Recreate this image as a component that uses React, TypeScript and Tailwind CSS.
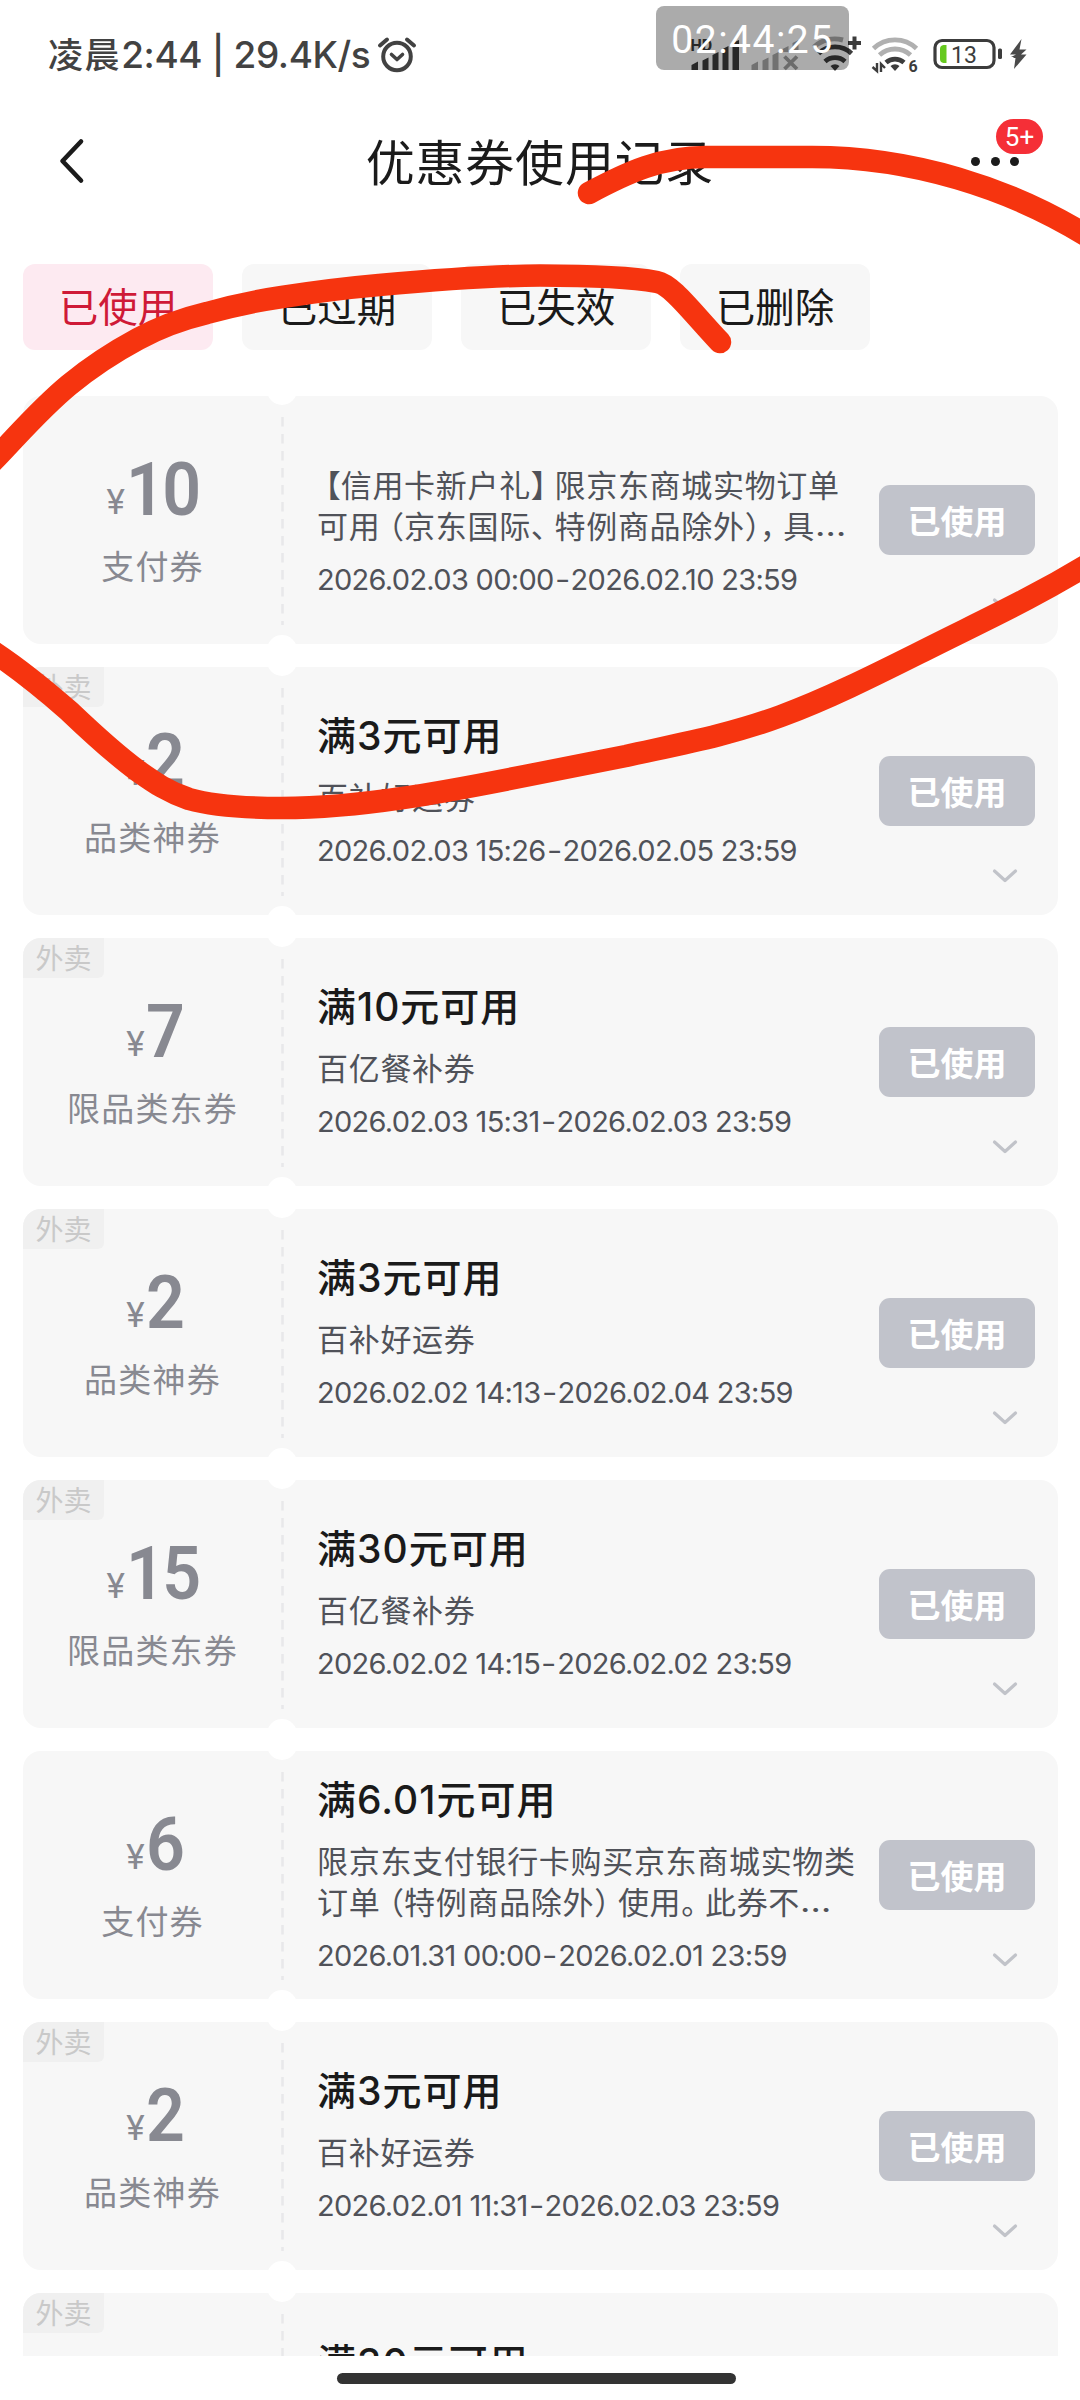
interface Coupon {
  tag?: string;
  amount: string;
  kind: string;
  title?: string;
  lines: string[];
  from: string;
  to: string;
}

const coupons: Coupon[] = [
  {
    amount: "10",
    kind: "支付券",
    lines: ["【信用卡新户礼】限京东商城实物订单", "可用（京东国际、特例商品除外），具…"],
    from: "2026.02.03 00:00",
    to: "2026.02.10 23:59",
  },
  {
    tag: "外卖",
    amount: "2",
    kind: "品类神券",
    title: "满3元可用",
    lines: ["百补好运券"],
    from: "2026.02.03 15:26",
    to: "2026.02.05 23:59",
  },
  {
    tag: "外卖",
    amount: "7",
    kind: "限品类东券",
    title: "满10元可用",
    lines: ["百亿餐补券"],
    from: "2026.02.03 15:31",
    to: "2026.02.03 23:59",
  },
  {
    tag: "外卖",
    amount: "2",
    kind: "品类神券",
    title: "满3元可用",
    lines: ["百补好运券"],
    from: "2026.02.02 14:13",
    to: "2026.02.04 23:59",
  },
  {
    tag: "外卖",
    amount: "15",
    kind: "限品类东券",
    title: "满30元可用",
    lines: ["百亿餐补券"],
    from: "2026.02.02 14:15",
    to: "2026.02.02 23:59",
  },
  {
    amount: "6",
    kind: "支付券",
    title: "满6.01元可用",
    lines: ["限京东支付银行卡购买京东商城实物类", "订单（特例商品除外）使用。此券不…"],
    from: "2026.01.31 00:00",
    to: "2026.02.01 23:59",
  },
  {
    tag: "外卖",
    amount: "2",
    kind: "品类神券",
    title: "满3元可用",
    lines: ["百补好运券"],
    from: "2026.02.01 11:31",
    to: "2026.02.03 23:59",
  },
  {
    tag: "外卖",
    amount: "",
    kind: "",
    title: "满30元可用",
    lines: [],
    from: "",
    to: "",
  },
];

const tabs = ["已使用", "已过期", "已失效", "已删除"];

const StatusIcons = () => (
  <svg className="w-[340px] h-[48px]" viewBox="690 32 340 48" fill="none">
    {/* SIM 1 */}
    <text x="690.500" y="50.500" fontSize="16" fontWeight="700" fill="#3c3c3c" className="font-['Roboto',sans-serif]">HD</text>
    <path
      d="M691.5 70V65l6.5-3.5V70ZM702.500 70V60.500l6-3V70ZM712.500 70V55l6-3V70ZM722.500 70V49l6-3V70ZM732.500 70V43l6.500-3V70Z"
      fill="#3c3c3c"
    />
    {/* SIM 2 */}
    <path
      d="M751.500 70V65l6.500-3.500V70ZM762.500 70V60.500l6-3V70ZM772.500 70V55l6-3V70ZM782.500 52v-3l6-3v6ZM792.500 52V43l6-3v12Z"
      fill="#a9a9a9"
    />
    <path d="m784.500 56.500 12.500 12.500m0-12.500-12.500 12.500" stroke="#a0a0a0" strokeWidth="3.800" />
    {/* Wi-Fi + */}
    <path d="M814 47a31 31 0 0 1 29-7" stroke="#aaa" strokeWidth="5" />
    <path d="M818.500 53.500a24 24 0 0 1 33 0" stroke="#3c3c3c" strokeWidth="4.800" />
    <path d="M825 61.500a15 15 0 0 1 20 0" stroke="#3c3c3c" strokeWidth="4.800" />
    <path d="M835 71l-4.500-5a7 7 0 0 1 9 0Z" fill="#3c3c3c" />
    <path d="M854.500 36.500v13M848 43h13" stroke="#3c3c3c" strokeWidth="4" />
    {/* Wi-Fi 6 */}
    <path d="M873.500 48.500a31 31 0 0 1 43 0" stroke="#b0b0b0" strokeWidth="4.800" />
    <path d="M879.500 55a23 23 0 0 1 31 0" stroke="#b0b0b0" strokeWidth="4.800" />
    <path d="M886 62.500a14 14 0 0 1 18 0" stroke="#3c3c3c" strokeWidth="4.800" />
    <path d="M895 71l-4.500-5a7 7 0 0 1 9 0Z" fill="#3c3c3c" />
    <path d="M877 63v8l-4.500-4M881 72v-8l4 4" stroke="#3c3c3c" strokeWidth="2.400" />
    <text x="908.500" y="72" fontSize="16" fontWeight="700" fill="#3c3c3c" className="font-['Roboto',sans-serif]">6</text>
    {/* Battery */}
    <rect x="935" y="40.500" width="59" height="27" rx="7" stroke="#3c3c3c" strokeWidth="3.200" />
    <rect x="998" y="48.500" width="4" height="10.500" rx="1.500" fill="#3c3c3c" />
    <path d="M946.500 45v18h-3a4 4 0 0 1-3.500-4V49a4 4 0 0 1 3.500-4Z" fill="#66c91f" />
    <text x="964" y="63" fontSize="23" textAnchor="middle" fill="#3c3c3c" className="font-['Roboto',sans-serif]">13</text>
    <path d="M1021.500 39 1010 54.500h6L1011 57h3l-1 1h2.500l-1.500 11 12.500-14.500h-5.500l5.500-5h-7Z" fill="#4a4a4a" />
  </svg>
);

const StatusBar = () => (
  <div className="relative h-[104px] pl-12 pr-[50px] pt-8 flex justify-between items-start text-[#424242]">
    <div className="flex items-center h-[46px] leading-[46px] font-medium whitespace-nowrap">
      <span className="-mt-1 text-[35px] tracking-[1.6px]">凌晨</span>
      <span className="font-['Inter',sans-serif] text-[37px] tracking-[-0.4px] w-[255px]">2:44 | 29.4K/s</span>
      <svg className="-mt-px w-[42px] h-[42px]" viewBox="0 0 42 42" fill="none" stroke="#424242" strokeLinecap="round" strokeLinejoin="round">
        <circle cx="21" cy="22.500" r="13.800" strokeWidth="4" />
        <path d="M15.500 20.500 21 25.500l5.500-5" strokeWidth="3.600" />
        <path d="M4 11.500 11 5.500M38 11.500 31 5.500" strokeWidth="4" />
      </svg>
    </div>
    <StatusIcons />
    {/* Floating clock */}
    <div className="absolute left-[656px] top-[6px] w-[193px] h-16 rounded-lg bg-black/33 flex items-center justify-center text-white font-['Roboto',sans-serif] text-[39px] tracking-[1.5px] pt-[5px]">
      02:44:25
    </div>
  </div>
);

const Header = () => (
  <header className="relative h-[118px] pb-1.5 flex justify-center items-center">
    <svg className="absolute left-[56px] top-[31px] w-8 h-[52px]" viewBox="0 0 32 52" fill="none">
      <path d="M25 6.500 6.500 26 25 45.500" stroke="#1b1b1b" strokeWidth="4.600" strokeLinecap="round" strokeLinejoin="round" />
    </svg>
    <h1 className="text-[49px] leading-[60px] tracking-[0.8px] text-[#1b1b1b]">优惠券使用记录</h1>
    <div className="absolute left-[971px] top-[53px] flex gap-[10.5px]">
      <i className="w-[9px] h-[9px] rounded-full bg-[#1b1b1b]" />
      <i className="w-[9px] h-[9px] rounded-full bg-[#1b1b1b]" />
      <i className="w-[9px] h-[9px] rounded-full bg-[#1b1b1b]" />
    </div>
    <span className="absolute left-[996px] top-[15px] w-[47px] h-[35px] rounded-full bg-[#f52f37] text-white font-['Roboto',sans-serif] text-[26px] leading-[37px] text-center">
      5+
    </span>
  </header>
);

// Punctuation is set narrower than a full em
const TextLine = ({ text }: { text: string }) => (
  <span className="flex">
    {[...text].map((ch, i) => {
      let cls = "w-[31.700px]";
      if ("【（".includes(ch)) cls = "w-[23.700px] flex justify-end";
      else if (ch === "）" && text[i + 1] === "，") cls = "w-[15px]";
      else if ("】），、。".includes(ch)) cls = "w-[23.700px]";
      else if (ch === "…") cls = "font-['Inter',sans-serif] origin-left scale-x-[1.17]";
      return <span key={i} className={cls}>{ch}</span>;
    })}
  </span>
);

const CouponCard = ({ coupon }: { coupon: Coupon }) => (
  <div className="relative h-[248px] shrink-0 flex rounded-[18px] bg-[#f7f7f7] overflow-hidden">
    {coupon.tag && (
      <span className="absolute left-0 top-0 w-[81px] h-10 rounded-br-md bg-[#f0f0f0] text-[#c9c9c9] text-[28px] leading-[38px] text-center">
        {coupon.tag}
      </span>
    )}
    {/* Notches and tear line */}
    <i className="absolute left-[244px] -top-[21px] w-[30px] h-[30px] rounded-full bg-white" />
    <i className="absolute left-[244px] -bottom-[21px] w-[30px] h-[30px] rounded-full bg-white" />
    <svg className="absolute left-[258px] top-[21px] w-[3px] h-[208px]" viewBox="0 0 3 208">
      <path d="M1.500 0V208" stroke="#e8e8ea" strokeWidth="2.500" strokeDasharray="9.500 7.500" />
    </svg>

    <div className="w-[259px] flex flex-col items-center text-[#888991]">
      {coupon.amount && (
        <div className="mt-[54px] h-[80px] flex items-baseline leading-[80px] font-['Roboto',sans-serif]">
          <span className="text-[35px] mr-[2px] relative -top-px left-px">¥</span>
          <span className="text-[74px] font-semibold origin-left scale-x-[0.92] tracking-[-3px] -mr-[5px]">{coupon.amount}</span>
        </div>
      )}
      <div className="mt-[12px] text-[33px] leading-[46px] tracking-[1.2px]">{coupon.kind}</div>
    </div>

    {coupon.from ? (
      <div className="flex-1 h-[245px] pl-[35px] flex flex-col justify-center">
        {coupon.title ? (
          <div className="h-[52px] mb-[13px] text-[39px] leading-[52px] font-medium text-[#1a1a1a] font-['Inter','Noto_Sans_CJK_SC',sans-serif] tracking-[1px]">
            {coupon.title}
          </div>
        ) : (
          <div className="h-[24px]" />
        )}
        <div className="text-[31px] leading-[41px] text-[#505259] whitespace-nowrap">
          {coupon.lines.map((l) => (
            <TextLine key={l} text={l} />
          ))}
        </div>
        <div className="mt-[17px] h-9 flex font-['Inter',sans-serif] text-[29px] leading-9 tracking-[-0.7px] text-[#505259] whitespace-nowrap">
          <span>{coupon.from}</span>
          <span className="w-[17px] flex justify-center"><span className="scale-x-[1.15]">-</span></span>
          <span>{coupon.to}</span>
        </div>
      </div>
    ) : (
      <div className="flex-1 pt-[44px] pl-[35px] text-[39px] leading-[52px] font-medium text-[#1a1a1a] font-['Inter','Noto_Sans_CJK_SC',sans-serif] tracking-[1px]">
        {coupon.title}
      </div>
    )}

    {coupon.from && (
      <div className="absolute right-[23px] top-[89px] w-[156px] flex flex-col items-end">
        <button className="w-[156px] h-[70px] rounded-[11px] bg-[#c1c3cb] text-white text-[33px] leading-[68px] font-bold">已使用</button>
        <svg className="mt-[41px] mr-[16px] w-7 h-[18px]" viewBox="0 0 28 18" fill="none">
          <path d="M3.500 4 14 13.500 24.500 4" stroke="#c1c3c9" strokeWidth="3.200" strokeLinecap="round" strokeLinejoin="round" />
        </svg>
      </div>
    )}
  </div>
);

export default function App() {
  return (
    <div lang="zh-CN" className="relative w-[1080px] h-[2400px] flex flex-col bg-white overflow-hidden font-['Noto_Sans_CJK_SC',sans-serif]">
      <StatusBar />
      <Header />

      <nav className="mt-[42px] ml-[23px] h-[86px] flex gap-[29px]">
        {tabs.map((tab, i) => (
          <button
            key={tab}
            className={`w-[190px] pb-1 rounded-xl text-[39.5px] leading-[82px] ${
              i === 0 ? "bg-[#fdeaf1] text-[#cf1a37]" : "bg-[#f7f7f7] text-[#1a1a1a]"
            }`}
          >
            {tab}
          </button>
        ))}
      </nav>

      <main className="mt-[46px] h-[1960px] pl-[23px] pr-[22px] flex flex-col gap-[23px] overflow-hidden">
        {coupons.map((coupon, i) => (
          <CouponCard key={i} coupon={coupon} />
        ))}
      </main>

      <div className="mt-[17px] ml-[337px] w-[399px] h-[11px] rounded-full bg-[#333]" />

      {/* Hand-drawn marker */}
      <svg className="absolute inset-0 w-[1080px] h-[2400px] pointer-events-none" viewBox="0 0 1080 2400" fill="none">
        <g stroke="#f6340f" strokeWidth="22.500" strokeLinecap="round" strokeLinejoin="round">
          <path d="M589 193C628 172 661 157 706 157H812C910 157 1010 187 1092 239" />
          <path d="M1092 562C1030 600 980 622 919 653C873 676 827 699 781 716C730 735 680 744 626 756L540 773C440 793 360 808 282 808C240 808 210 805 189 799C168 792 155 783 138 771C112 752 90 731 69 711C45 690 25 673 -5 653" />
          <path d="M-8 462C20 433 40 409 69 385C92 366 112 353 138 339C160 327 182 319 207 313C232 306 255 301 282 297C314 292 345 288 379 285C435 280 490 275.500 540 275.500C580 275.500 630 277 657 282C672 285 690 310 720 342" />
        </g>
      </svg>
    </div>
  );
}
